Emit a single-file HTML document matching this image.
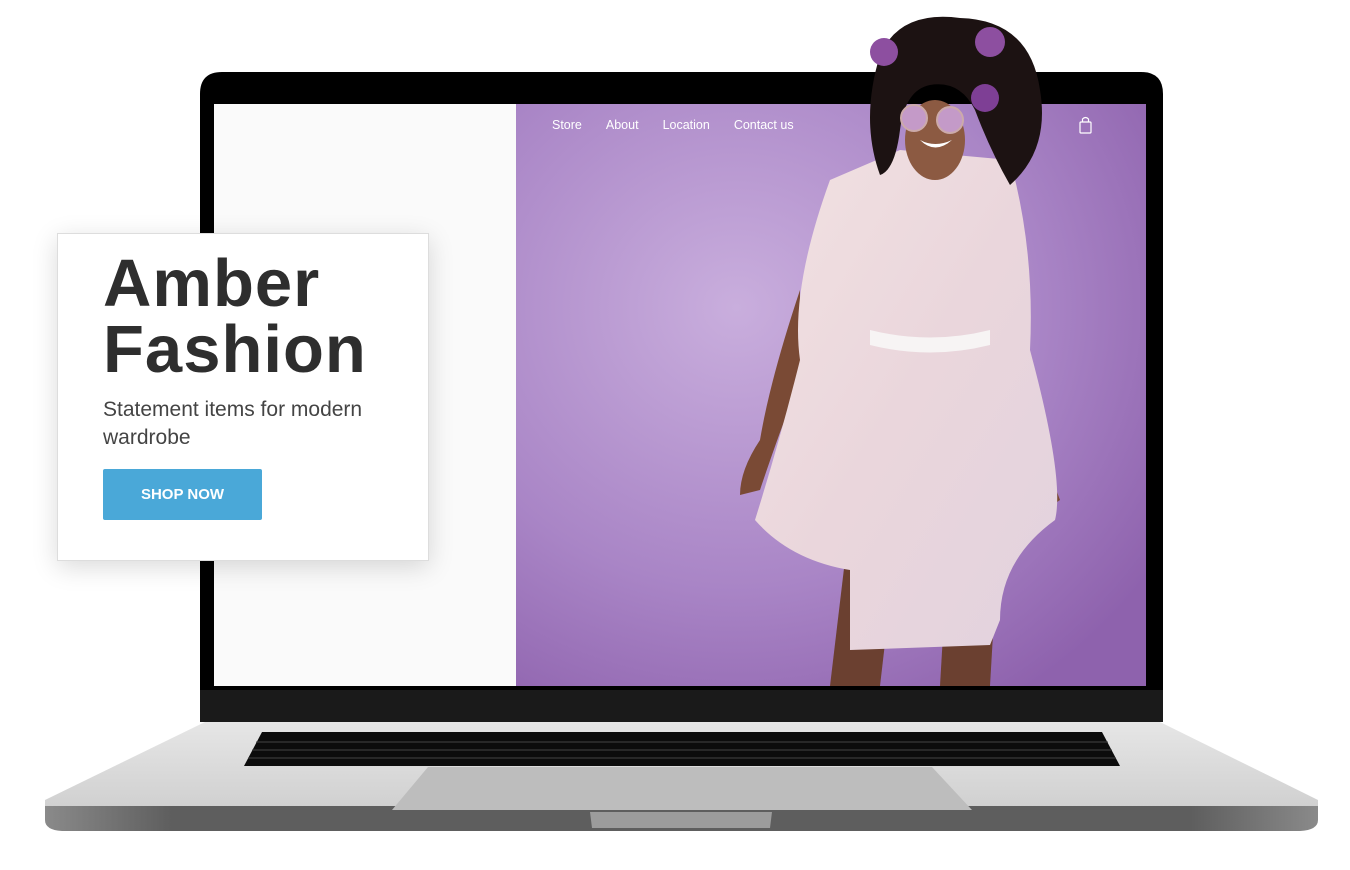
<!DOCTYPE html>
<html><head><meta charset="utf-8"><style>
*{margin:0;padding:0;box-sizing:border-box}
body{width:1350px;height:870px;background:#fff;position:relative;overflow:hidden;font-family:"Liberation Sans",sans-serif}
.abs{position:absolute}
</style></head><body>
<svg class="abs" style="left:0;top:0" width="1350" height="870">
<defs>
<linearGradient id="base" x1="0" y1="0" x2="0" y2="1"><stop offset="0" stop-color="#e6e6e6"/><stop offset="1" stop-color="#cfcfcf"/></linearGradient>
<linearGradient id="edge" x1="0" y1="0" x2="1" y2="0"><stop offset="0" stop-color="#8a8a8a"/><stop offset=".1" stop-color="#5e5e5e"/><stop offset=".9" stop-color="#5e5e5e"/><stop offset="1" stop-color="#8a8a8a"/></linearGradient>
<radialGradient id="purp" cx=".35" cy=".35" r=".8"><stop offset="0" stop-color="#c9aedd"/><stop offset=".6" stop-color="#a985c6"/><stop offset="1" stop-color="#8e62ad"/></radialGradient>
<linearGradient id="dress" x1="0" y1="0" x2="1" y2="1"><stop offset="0" stop-color="#f2e2e2"/><stop offset=".5" stop-color="#ead6dc"/><stop offset="1" stop-color="#e2d2de"/></linearGradient>
</defs>
<path d="M205 722 L1160 722 L1318 800 L1318 812 L45 812 L45 800 Z" fill="url(#base)"/>
<path d="M45 806 L1318 806 L1318 820 Q1318 830 1300 831 L62 831 Q45 830 45 820 Z" fill="url(#edge)"/>
<path d="M590 812 L772 812 L770 828 L592 828 Z" fill="#9c9c9c"/>
<path d="M262 732 L1102 732 L1120 766 L244 766 Z" fill="#0c0c0c"/>
<g stroke="#444" stroke-width="1">
<line x1="256" y1="742" x2="1108" y2="742"/><line x1="252" y1="750" x2="1112" y2="750"/><line x1="248" y1="758" x2="1116" y2="758"/>
</g>
<path d="M428 767 L932 767 L972 810 L392 810 Z" fill="#bdbdbd"/>
<path d="M222 72 L1141 72 Q1163 72 1163 94 L1163 722 L200 722 L200 94 Q200 72 222 72Z" fill="#000"/>
<rect x="200" y="690" width="963" height="32" fill="#1a1a1a"/>
<rect x="214" y="104" width="302" height="582" fill="#fafafa"/>
<rect x="516" y="104" width="630" height="582" fill="url(#purp)"/>
<path d="M845 560 L830 686 L880 686 L890 600 Z" fill="#6b4030"/>
<path d="M945 600 L940 686 L990 686 L995 600 Z" fill="#6b4030"/>
<path d="M800 290 Q770 380 760 440 Q740 470 740 495 L760 490 Q780 430 800 380 Z" fill="#7a4a35"/>
<path d="M1015 330 Q1040 400 1045 460 L1060 500 L1045 510 Q1025 440 1005 380 Z" fill="#7a4a35"/>
<path d="M900 150 L1010 160 Q1035 250 1030 350 Q1065 480 1055 520 Q1000 560 1000 620 L990 645 L850 650 L850 570 Q790 560 755 520 Q780 440 800 360 Q790 290 830 180 Z" fill="url(#dress)"/>
<path d="M870 330 Q930 345 990 330 L990 345 Q930 360 870 345 Z" fill="#f7f4f4"/>
<ellipse cx="935" cy="140" rx="30" ry="40" fill="#8c5a42"/>
<path d="M880 55 Q900 10 960 18 Q1030 20 1040 90 Q1050 150 1010 185 Q990 150 975 110 Q960 80 930 85 Q905 90 900 130 Q895 170 880 175 Q860 120 880 55 Z" fill="#1c1212"/>
<circle cx="884" cy="52" r="14" fill="#8d4fa0"/><circle cx="990" cy="42" r="15" fill="#8d4fa0"/><circle cx="985" cy="98" r="14" fill="#7e3f95"/>
<circle cx="914" cy="118" r="13" fill="#c49ac8" stroke="#caa" stroke-width="2"/><circle cx="950" cy="120" r="13" fill="#c49ac8" stroke="#caa" stroke-width="2"/>
<path d="M920 140 Q935 155 952 140 Q935 148 920 140Z" fill="#fff"/>
<rect x="1080" y="122" width="11" height="11" rx="1" fill="none" stroke="#fff" stroke-width="1.2"/>
<path d="M1082.5 122 V119 Q1085.5 116 1088.5 119 V122" fill="none" stroke="#fff" stroke-width="1.2"/>
</svg>
<div class="abs" style="left:552px;top:118px;color:#fff;font-size:12.5px;white-space:nowrap">
<span>Store</span><span style="margin-left:24px">About</span><span style="margin-left:24px">Location</span><span style="margin-left:24px">Contact us</span></div>
<div class="abs" style="left:57px;top:233px;width:372px;height:328px;background:#fff;border:1px solid #ddd;box-shadow:0 6px 24px rgba(0,0,0,.15)">
<div class="abs" style="left:45px;top:17px;font-size:67px;font-weight:bold;color:#2e2e2e;line-height:66px;letter-spacing:1px;white-space:nowrap">Amber<br>Fashion</div>
<div class="abs" style="left:45px;top:162px;font-size:21px;color:#444;line-height:28px">Statement items for modern<br>wardrobe</div>
<div class="abs" style="left:45px;top:235px;width:159px;height:51px;background:#4aa8d8;border-radius:2px;color:#fff;font-weight:bold;font-size:15px;text-align:center;line-height:51px">SHOP NOW</div>
</div>
</body></html>
